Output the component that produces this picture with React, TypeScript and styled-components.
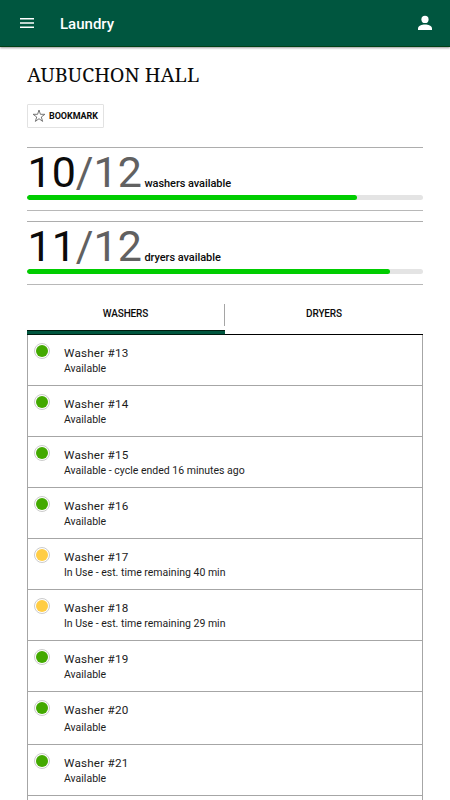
import React from "react";
import styled, { createGlobalStyle } from "styled-components";

const GlobalStyle = createGlobalStyle`
  *, *::after { box-sizing: border-box; }
  html, body { margin: 0; height: 100%; overflow: hidden; background: #fff; }
  body { font-family: Roboto, "Liberation Sans", sans-serif; color: #0b0b0b; }
  button { font: inherit; color: inherit; background: none; border: 0; padding: 0; margin: 0; }
`;

const Page = styled.div`
  height: 800px;
  overflow: hidden;
`;

const Header = styled.header`
  display: flex;
  align-items: center;
  height: 47px;
  padding: 0 16px 0 20px;
  background: #00563f;
  border-bottom: 1px solid #004016;
  box-shadow: 0 1px 2px rgba(0, 0, 0, 0.4);
  color: #fff;
`;

const IconButton = styled.button`
  display: flex;
  svg { display: block; }
`;

const HeaderTitle = styled.div`
  flex: 1;
  margin: 2px 0 0 26px;
  font-size: 15px;
  line-height: 18px;
  font-weight: 500;
`;

const Main = styled.main`
  padding: 0 27px;
`;

const HallName = styled.h1`
  width: max-content;
  margin: 13px 0 0;
  font-family: "Noto Serif", "Liberation Serif", serif;
  font-size: 20.5px;
  line-height: 28px;
  font-weight: 400;
  white-space: nowrap;
  transform: scaleX(0.967);
  transform-origin: 0 0;
`;

const BookmarkButton = styled.button`
  display: flex;
  align-items: center;
  gap: 3px;
  width: 77px;
  height: 24px;
  margin-top: 16px;
  padding-left: 4px;
  border: 1px solid #e2e2e2;
  border-radius: 1px;
  font-size: 9px;
  font-weight: 700;
  letter-spacing: -0.05px;
`;

const Summary = styled.section`
  height: 64px;
  border-top: 1px solid #adadad;
  border-bottom: 1px solid #b8b8b8;
  margin-top: ${({ $gap }: { $gap: number }) => $gap}px;
`;

const Counts = styled.div`
  display: flex;
  align-items: baseline;
  height: 47px;
  padding-left: 0.5px;
  font-size: 43px;
  line-height: 49px;
  white-space: nowrap;
`;

const Total = styled.span`
  color: #616161;
`;

const CountLabel = styled.span`
  margin-left: 2.5px;
  font-size: 11px;
  font-weight: 500;
  letter-spacing: -0.06px;
`;

const Track = styled.div`
  height: 5px;
  border-radius: 3px;
  background: #e4e4e4;
  overflow: hidden;
`;

const Fill = styled.div`
  height: 100%;
  border-radius: 3px;
  background: #00cd00;
`;

const Tabs = styled.div`
  display: grid;
  grid-template-columns: 198px 198px;
  height: 31px;
  margin-top: 19px;
`;

const Tab = styled.button<{ $active?: boolean }>`
  display: flex;
  flex-direction: column;
  justify-content: space-between;
  font-size: 10px;
  font-weight: 500;
  letter-spacing: -0.15px;
  border-bottom: ${({ $active }) => ($active ? "0" : "1px solid #000")};
  &::after {
    content: "";
    display: ${({ $active }) => ($active ? "block" : "none")};
    width: 100%;
    height: 5px;
    background: #00563f;
    border: solid #001c10;
    border-width: 1px 0;
  }
`;

const TabLabel = styled.span<{ $divided?: boolean }>`
  display: block;
  width: 100%;
  height: 22px;
  line-height: 20px;
  border-right: ${({ $divided }) => ($divided ? "1px solid #a5a5a5" : "0")};
`;

const MachineList = styled.ul`
  list-style: none;
  margin: 0;
  padding: 0;
  border: solid #a6a6a6;
  border-width: 0 1px;
`;

const MachineRow = styled.li<{ $tall?: boolean }>`
  display: flex;
  align-items: flex-start;
  height: ${({ $tall }) => ($tall ? 53 : 51)}px;
  padding: 8px 0 0 6px;
  border-bottom: 1px solid #a6a6a6;
`;

const StatusDot = styled.span<{ $busy: boolean }>`
  width: 16px;
  height: 16px;
  border: 1px solid #ccc;
  border-radius: 50%;
  padding: 1px;
  background: ${({ $busy }) => ($busy ? "#ffcd45" : "#43a900")} content-box;
`;

const MachineText = styled.div`
  margin-left: 14px;
  padding-top: 3px;
  color: #1c1c1c;
`;

const MachineName = styled.div`
  font-size: 11.7px;
  line-height: 14px;
  letter-spacing: 0.2px;
`;

const MachineStatus = styled.div<{ $lower?: boolean }>`
  margin-top: ${({ $lower }) => ($lower ? 4 : 2)}px;
  font-size: 10.5px;
  line-height: 14px;
`;

const summaries = [
  { free: 10, total: 12, label: "washers available", gap: 19 },
  { free: 11, total: 12, label: "dryers available", gap: 10 },
];

const machines = [
  { id: 13, status: "Available" },
  { id: 14, status: "Available" },
  { id: 15, status: "Available - cycle ended 16 minutes ago" },
  { id: 16, status: "Available" },
  { id: 17, status: "In Use - est. time remaining 40 min", busy: true },
  { id: 18, status: "In Use - est. time remaining 29 min", busy: true },
  { id: 19, status: "Available" },
  { id: 20, status: "Available", tall: true },
  { id: 21, status: "Available" },
];

export default function App() {
  return (
    <Page>
      <GlobalStyle />
      <Header>
        <IconButton aria-label="Menu">
          <svg width="14" height="10" viewBox="0 0 14 10" fill="#fff">
            <path d="M0 0h14v1.6H0zM0 4.2h14v1.6H0zM0 8.4h14v1.6H0z" />
          </svg>
        </IconButton>
        <HeaderTitle>Laundry</HeaderTitle>
        <IconButton aria-label="Account">
          <svg width="18" height="20" viewBox="0 0 18 20" fill="#fff">
            <circle cx="9" cy="6.4" r="3.6" />
            <path d="M2 17v-1.500c0-2.700 3.800-4 7-4s7 1.300 7 4V17z" />
          </svg>
        </IconButton>
      </Header>
      <Main>
        <HallName>AUBUCHON HALL</HallName>
        <BookmarkButton>
          <svg width="14" height="14" viewBox="0 0 14 14" fill="none" stroke="#666" strokeWidth="0.9">
            <path d="M7 1 8.400 5.300H12.900L9.300 8 10.600 12.400 7 9.700 3.400 12.400 4.700 8 1.100 5.300H5.600Z" />
          </svg>
          BOOKMARK
        </BookmarkButton>
        {summaries.map(({ free, total, label, gap }) => (
          <Summary key={label} $gap={gap}>
            <Counts>
              {free}
              <Total>/{total}</Total>
              <CountLabel>{label}</CountLabel>
            </Counts>
            <Track>
              <Fill style={{ width: `${(free / total) * 100}%` }} />
            </Track>
          </Summary>
        ))}
        <Tabs>
          <Tab $active>
            <TabLabel $divided>WASHERS</TabLabel>
          </Tab>
          <Tab>
            <TabLabel>DRYERS</TabLabel>
          </Tab>
        </Tabs>
        <MachineList>
          {machines.map(({ id, status, busy, tall }) => (
            <MachineRow key={id} $tall={tall}>
              <StatusDot $busy={!!busy} />
              <MachineText>
                <MachineName>Washer #{id}</MachineName>
                <MachineStatus $lower={tall}>{status}</MachineStatus>
              </MachineText>
            </MachineRow>
          ))}
          <MachineRow />
        </MachineList>
      </Main>
    </Page>
  );
}
